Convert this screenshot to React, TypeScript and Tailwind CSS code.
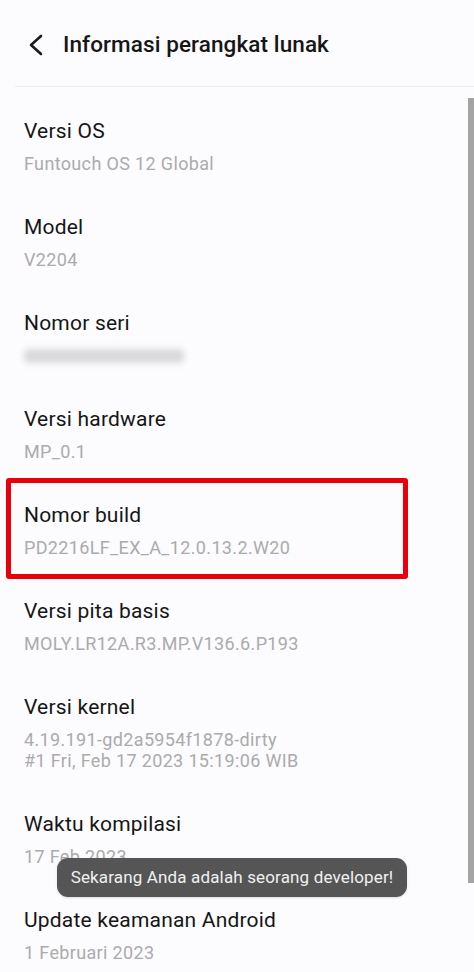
import React from "react";

type Item = { title: string; values?: string[]; blurred?: boolean };

const items: Item[] = [
  { title: "Versi OS", values: ["Funtouch OS 12 Global"] },
  { title: "Model", values: ["V2204"] },
  { title: "Nomor seri", blurred: true },
  { title: "Versi hardware", values: ["MP_0.1"] },
  { title: "Nomor build", values: ["PD2216LF_EX_A_12.0.13.2.W20"] },
  { title: "Versi pita basis", values: ["MOLY.LR12A.R3.MP.V136.6.P193"] },
  {
    title: "Versi kernel",
    values: ["4.19.191-gd2a5954f1878-dirty", "#1 Fri, Feb 17 2023 15:19:06 WIB"],
  },
  { title: "Waktu kompilasi", values: ["17 Feb 2023"] },
  { title: "Update keamanan Android", values: ["1 Februari 2023"] },
];

function Row({ item }: { item: Item }) {
  return (
    <div className="px-6 pt-[30px] pb-[9px]">
      <div className="text-[21px] leading-[28px] tracking-[0.2px] text-[#161616]">{item.title}</div>
      <div className="mt-2">
        {item.blurred ? (
          <div className="h-[21px] flex items-center">
            <div className="h-[14px] w-[160px] rounded bg-[#d9d9dc] blur-[3px]" />
          </div>
        ) : (
          item.values?.map((v) => (
            <div key={v} className="text-[18px] leading-[21px] tracking-[0.35px] text-[#ababab]">
              {v}
            </div>
          ))
        )}
      </div>
    </div>
  );
}

export default function App() {
  return (
    <div
      className="relative h-[972px] w-[474px] overflow-hidden bg-[#fcfbfe]"
      style={{ fontFamily: "Roboto, 'Noto Sans', sans-serif" }}
    >
      <header className="h-[86px] flex items-center pl-[26px] pt-1">
        <svg width="20" height="24" viewBox="0 0 20 24" className="shrink-0">
          <path
            d="M15 3 L5 12 L15 21"
            fill="none"
            stroke="#1a1a1a"
            strokeWidth="2.6"
            strokeLinecap="round"
            strokeLinejoin="round"
          />
        </svg>
        <h1 className="ml-[17px] text-[22.5px] font-medium text-[#161616] tracking-[0.1px]">
          Informasi perangkat lunak
        </h1>
      </header>
      <div className="ml-[15px] h-px bg-[#ececf0]" />

      <div className="flex flex-col">
        {items.map((it) => (
          <Row key={it.title} item={it} />
        ))}
      </div>

      {/* highlight box */}
      <div className="absolute left-[6px] top-[478px] w-[402px] h-[101px] border-[5px] border-[#e8000b] rounded-[3px]" />

      {/* scrollbar */}
      <div className="absolute right-0 top-[98px] w-[6px] h-[785px] bg-[#a4a4a4]" />

      {/* toast */}
      <div className="absolute left-[57px] top-[858px] w-[350px] h-[39px] rounded-[11px] bg-[#555556] flex items-center justify-center shadow-sm">
        <span className="text-[17px] text-[#f0f0f0] tracking-[0.15px]">
          Sekarang Anda adalah seorang developer!
        </span>
      </div>
    </div>
  );
}
